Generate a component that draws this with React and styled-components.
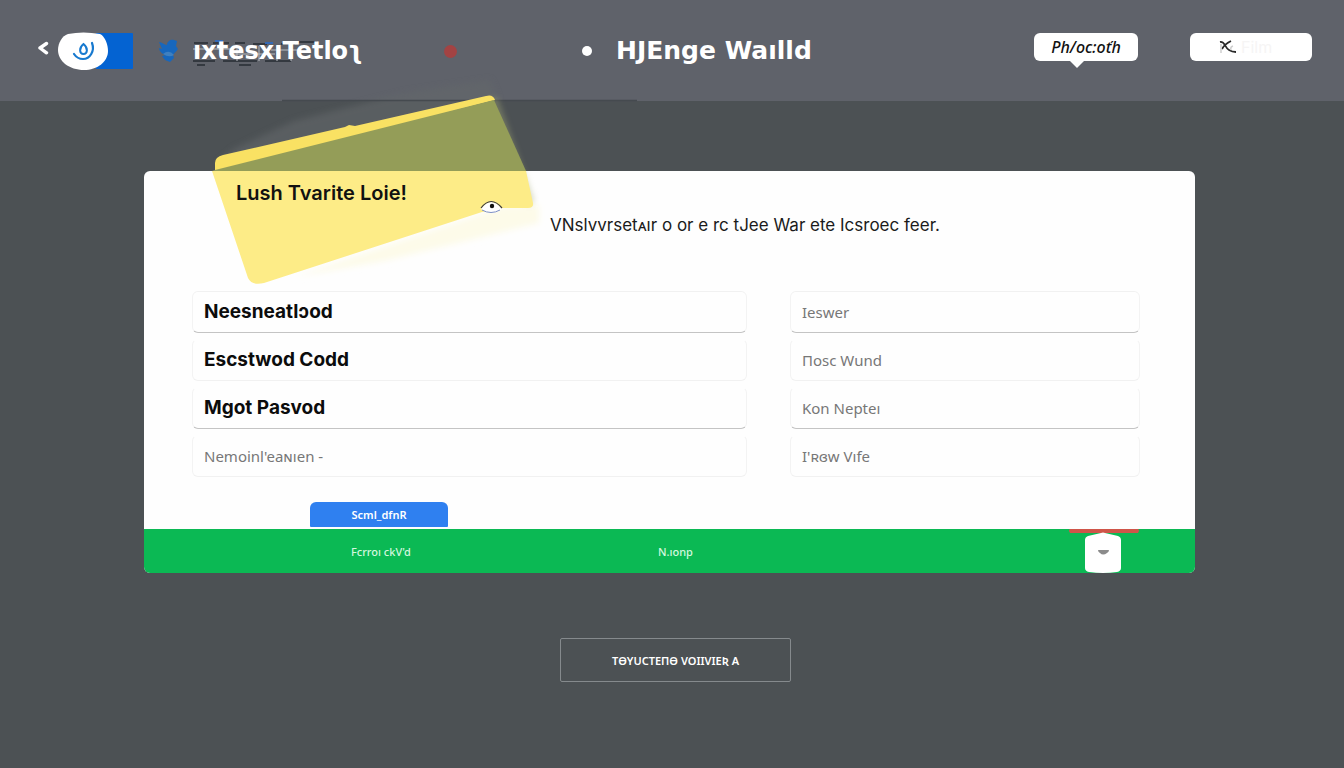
import React, { useState } from 'react'
import styled, { createGlobalStyle } from 'styled-components'

const fields = [
    { name: 'name', value: 'Neesneatlɔod', hint: 'Ieswer' },
    { name: 'code', value: 'Escstwod Codd', hint: 'Πosc Wund' },
    { name: 'password', value: 'Mgot Pasvod', hint: 'Kon Nepteı' },
    { name: 'reminder', placeholder: "Nemoinl'eaɴıen -", hint: "I'ʀɞw Vıfe" },
]

function Header() {
    const [active, setActive] = useState(true)

    return (
        <Bar>
            <Group>
                <BackButton aria-label="Back">
                    <svg width="12" height="14" viewBox="0 0 12 14">
                        <path d="M9.5 2.5 3 7l6.5 4.8" fill="none" stroke="#fff" strokeWidth="3.4" strokeLinecap="round" strokeLinejoin="round" />
                    </svg>
                </BackButton>
                <Toggle aria-label="Mode" aria-pressed={active} onClick={() => setActive(!active)}>
                    <svg width="76" height="40" viewBox="0 0 76 40">
                        <path d="M38 2h36q1 0 1 1v34q0 1-1 1H38z" fill="#0463d2" />
                        <path d="M10 3Q25 0 42 3c5 2 8 11 8 17 0 11-11 19-24 19C11 39 0 30 0 19 0 12 4 5 10 3z" fill="#fff" />
                        <path d="M25.5 13c-5 4-4 10 0 10s5-6 0-10z" fill="none" stroke="#1779cf" strokeWidth="2" />
                        <path d="M34 12c3 8-2 16-9 16-4 0-7-2-9-5" fill="none" stroke="#1779cf" strokeWidth="2.2" strokeLinecap="round" />
                    </svg>
                </Toggle>
                <Bird width="22" height="24" viewBox="0 0 22 24">
                    <path d="M1 3c3 0 5 3 8 3 0-4 4-6 7-5l3 1-1 5 2 3c-2 3-4 4-5 6l1 3-4 4-5-2-3-4 4-1C4 15 1 12 1 9l3 1z" fill="#1767bd" />
                    <path d="M5 15q6-5 11 1-5 3-11-1z" fill="#3f80c0" />
                </Bird>
                <Brand>
                    <Smudge width="126" height="26" viewBox="0 0 126 26">
                        <path d="M1 3h14M20 3h16M42 3h10M60 4h14M88 4h14M106 2h18M0 21h22M30 21h34M72 21h26M4 25h8M46 25h12" stroke="#343940" strokeWidth="2" />
                        <path d="M0 9h40M36 14h46M78 10h28M44 6v15M66 6v15M84 6v15M98 6v15" stroke="#b9bcc1" strokeWidth="1" />
                        <path d="M22 1h8M72 3h8" stroke="#3469b5" strokeWidth="2" />
                    </Smudge>
                    <BrandText>ıxtesxıTetloʅ</BrandText>
                </Brand>
                <Dot $size={13} $color="#a34343" />
            </Group>
            <Group>
                <Dot $size={10} $color="#fff" />
                <PageTitle>HJEnge Waılld</PageTitle>
            </Group>
            <Group>
                <Bubble>Ph/oc:oťh</Bubble>
                <SearchButton aria-label="Search">
                    <svg width="18" height="14" viewBox="0 0 18 14">
                        <path d="M1 2c5-1 5 6 9 8 3 2 5 2 7 2M12 1C8 3 5 5 3 9" fill="none" stroke="#292929" strokeWidth="1.8" />
                        <path d="M2 4v9M14 6q-3 1-2 4" fill="none" stroke="#cfcfcf" strokeWidth="1.5" />
                    </svg>
                    <Ghost>Film</Ghost>
                </SearchButton>
            </Group>
        </Bar>
    )
}

// tilted paper note that hangs over the top edge of the card
function StickyNote() {
    return (
        <Note width="450" height="230" viewBox="0 0 450 230" aria-hidden="true">
            <defs>
                <filter id="soft" x="-10%" y="-10%" width="120%" height="120%">
                    <feGaussianBlur stdDeviation="3" />
                </filter>
            </defs>
            <path d="M30 78 90 50 200 22 286 9l8 20L13 92z" fill="#63686a" opacity=".6" filter="url(#soft)" />
            <path d="M78 29.500h355" stroke="#454a4f" strokeWidth="1.500" />
            <path d="M90 206 280 142l16-6 39-2v18L180 190z" fill="#fdfbe9" filter="url(#soft)" />
            <path d="M286 27h7l37 103-6 4z" fill="#a5aa76" opacity=".5" filter="url(#soft)" />
            <path d="M11 100V92q0-6 8-8L141 56l4-2 6 1L282 25q7-2 9 4L20 100z" fill="#f9e163" />
            <path d="M11 99 290 29l32 71H8z" fill="#949d58" />
            <path d="M8 100h314l7 32q1 5-5 5h-26l-20 4L60 212q-12 3-16-5z" fill="#fdec87" />
            <path d="M277 138q10-14 21 0-10 8-21 0z" fill="#fff" />
            <path d="M277 137q10-13 21 0" fill="none" stroke="#3b3b3b" strokeWidth="1.200" />
            <path d="M278 139q9 5 18 0" fill="none" stroke="#7d8fc5" strokeWidth="1" />
            <circle cx="288" cy="135" r="2.200" fill="#111" />
        </Note>
    )
}

function App() {
    return (
        <Page>
            <GlobalStyle />
            <Header />
            <Main>
                <Card>
                    <StickyNote />
                    <Intro>
                        <NoteTitle>Lush Tvarite Loie!</NoteTitle>
                        <Lead>VNslvvrsetᴀır o or e rc tJee War ete Icsroec feer.</Lead>
                    </Intro>
                    <Form>
                        {fields.map((field, i) => (
                            <React.Fragment key={field.name}>
                                <Field
                                    aria-label={field.name}
                                    defaultValue={field.value}
                                    placeholder={field.placeholder}
                                    $first={i === 0}
                                    $strong={i % 2 === 0}
                                />
                                <Field
                                    aria-label={`${field.name} hint`}
                                    placeholder={field.hint}
                                    $first={i === 0}
                                    $strong={i % 2 === 0}
                                />
                            </React.Fragment>
                        ))}
                    </Form>
                    <Submit>Scml_dfnR</Submit>
                    <Footer>
                        <FooterLink href="#">Fcrroı ckV'd</FooterLink>
                        <FooterLink href="#">N.ıonp</FooterLink>
                        <BadgeButton aria-label="Close panel">
                            <svg width="70" height="46" viewBox="0 0 70 46">
                                <path d="M1 0h68q1 0 1 2l-1 2H1L0 2q0-2 1-2z" fill="#cf5549" />
                                <path d="M16 11q0-3 3-4l13-3q2-1 4 0l13 3q3 1 3 4v28q0 3-4 4-14 2-28 0-4-1-4-4z" fill="#fff" />
                                <path d="M29 21h11q0 2-2 3-4 3-7 0-2-1-2-3z" fill="#8b8b8b" />
                            </svg>
                        </BadgeButton>
                    </Footer>
                </Card>
                <OutlineButton>TƟYUCTEПƟ VOIIVIEƦ A</OutlineButton>
            </Main>
        </Page>
    )
}

export default App

const GlobalStyle = createGlobalStyle`
    * {
        box-sizing: border-box;
    }
    body {
        margin: 0;
        background: #4c5154;
        font-family: Inter, "Noto Sans", sans-serif;
    }
    button, input {
        font-family: inherit;
    }
    button {
        border: 0;
        padding: 0;
        cursor: pointer;
    }
    svg {
        display: block;
    }
`
const Page = styled.div`
    min-height: 100vh;
`
const Bar = styled.header`
    display: grid;
    grid-template-columns: 545fr 452fr auto;
    height: 101px;
    padding: 32px 32px 0 37px;
    background: #5f626a;
`
const Group = styled.div`
    display: flex;
    align-items: center;
    height: 38px;
`
const BackButton = styled.button`
    background: none;
    margin: 0 9px 6px 0;
`
const Toggle = styled.button`
    background: none;
    margin-right: 24px;
`
const Bird = styled.svg`
    margin-right: 13px;
`
const Brand = styled.div`
    position: relative;
    width: 172px;
    margin-right: 79px;
`
const Smudge = styled.svg`
    position: absolute;
    top: 10px;
    left: 0;
`
const BrandText = styled.span`
    position: relative;
    color: #fff;
    font: 700 24px/42px "DejaVu Sans", sans-serif;
    white-space: nowrap;
`
const Dot = styled.span`
    width: ${props => props.$size}px;
    height: ${props => props.$size}px;
    border-radius: 50%;
    background: ${props => props.$color};
`
const PageTitle = styled.h1`
    margin: 0 0 0 24px;
    color: #fff;
    font: 700 25px/36px "DejaVu Sans", sans-serif;
    white-space: nowrap;
`
const Bubble = styled.button`
    position: relative;
    align-self: flex-start;
    width: 104px;
    height: 28px;
    margin: 1px 52px 0 0;
    border-radius: 6px;
    background: #fff;
    color: #111;
    font: italic 500 16px/28px "Noto Sans", sans-serif;

    &::after {
        content: '';
        position: absolute;
        top: 27px;
        left: 35px;
        border: 8px solid transparent;
        border-top-color: #fff;
        border-bottom: 0;
    }
`
const SearchButton = styled.button`
    display: flex;
    align-items: center;
    align-self: flex-start;
    gap: 4px;
    width: 122px;
    height: 28px;
    margin-top: 1px;
    padding-left: 29px;
    border-radius: 6px;
    background: #fff;
`
const Ghost = styled.span`
    color: #f6f5f5;
    font-size: 16px;
`
const Main = styled.main`
    display: flex;
    flex-direction: column;
    align-items: center;
    padding: 70px 149px 48px 144px;
`
const Card = styled.section`
    position: relative;
    width: 100%;
    border-radius: 6px;
    background: #fefefe;
`
const Note = styled.svg`
    position: absolute;
    top: -100px;
    left: 60px;
    pointer-events: none;
`
const Intro = styled.div`
    position: relative;
    display: flex;
    height: 120px;
    padding: 8px 48px 0 92px;
`
const NoteTitle = styled.h2`
    width: 314px;
    margin: 0;
    color: #111;
    font-size: 20px;
    font-weight: 600;
    line-height: 28px;
`
const Lead = styled.p`
    margin: 32px 0 0;
    color: #1b1b1b;
    font-size: 17px;
    line-height: 28px;
    white-space: nowrap;
`
const Form = styled.form`
    display: grid;
    grid-template-columns: 555fr 350fr;
    gap: 6px 43px;
    padding: 0 55px 0 48px;
`
const Field = styled.input`
    width: 100%;
    height: 42px;
    padding: 0 11px 2px;
    border: 1px solid #f3f3f3;
    border-top-color: ${props => props.$first ? '#f1f1f1' : 'transparent'};
    border-bottom-color: ${props => props.$strong ? '#c4c4c4' : '#f1f1f1'};
    border-radius: 6px;
    background: #fefefe;
    color: #0c0c0c;
    font-size: 19px;
    font-weight: 700;
    outline: none;

    &::placeholder {
        color: #777;
        font: 400 15px "Noto Sans", sans-serif;
        opacity: 1;
    }
`
const Submit = styled.button`
    display: block;
    width: 138px;
    height: 25px;
    margin: 25px 0 2px 166px;
    border-radius: 6px 6px 1px 1px;
    background: #2f80f0;
    color: #fff;
    font: 600 11px/22px "Noto Sans", sans-serif;
`
const Footer = styled.footer`
    display: grid;
    grid-template-columns: 307fr 411fr 126px;
    align-items: center;
    height: 44px;
    padding-left: 207px;
    border-radius: 0 0 6px 6px;
    background: #0bb954;
`
const FooterLink = styled.a`
    color: #d3f7df;
    font: 500 11px/16px "Noto Sans", sans-serif;
    text-decoration: none;
`
const BadgeButton = styled.button`
    align-self: end;
    width: 70px;
    background: none;
`
const OutlineButton = styled.button`
    width: 231px;
    height: 44px;
    margin: 65px 0 0 12px;
    border: 1px solid #858a8d;
    border-radius: 2px;
    background: transparent;
    color: #fff;
    font: 600 11px "Noto Sans", "DejaVu Sans", sans-serif;
`
